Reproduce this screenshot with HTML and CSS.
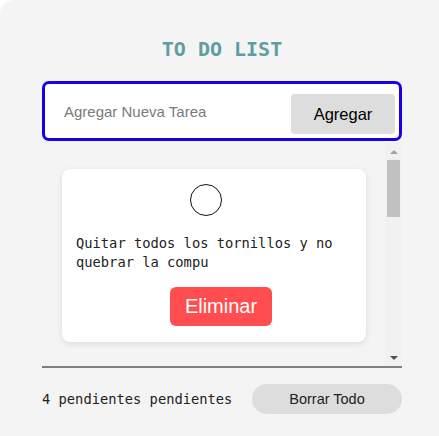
FILE: index.html
```html
<!DOCTYPE html>
<html lang="es">
<head>
<meta charset="utf-8">
<title>To Do List</title>
<link rel="stylesheet" href="styles.css">
</head>
<body>
<div class="app">
  <h1 class="title">TO DO LIST</h1>
  <form class="add-box" onsubmit="return false">
    <input class="add-input" type="text" placeholder="Agregar Nueva Tarea">
    <button class="add-btn" type="button">Agregar</button>
  </form>
  <div class="list-wrap">
    <div class="list">
      <div class="card">
        <span class="check"></span>
        <p class="task">Quitar todos los tornillos y no quebrar la compu</p>
        <button class="del-btn" type="button">Eliminar</button>
      </div>
      <div class="card">
        <span class="check"></span>
        <p class="task">Limpiar el ventilador y cambiar la pasta térmica</p>
        <button class="del-btn" type="button">Eliminar</button>
      </div>
      <div class="card">
        <span class="check"></span>
        <p class="task">Armar todo de nuevo sin que sobren piezas</p>
        <button class="del-btn" type="button">Eliminar</button>
      </div>
      <div class="card">
        <span class="check"></span>
        <p class="task">Prender la compu y rezar que funcione</p>
        <button class="del-btn" type="button">Eliminar</button>
      </div>
    </div>
    <div class="scrollbar" aria-hidden="true">
      <div class="sb-btn"><span class="arrow-up"></span></div>
      <div class="sb-track"><div class="sb-thumb"></div></div>
      <div class="sb-btn"><span class="arrow-down"></span></div>
    </div>
  </div>
  <div class="footer">
    <span class="count">4 pendientes pendientes</span>
    <button class="clear-btn" type="button">Borrar Todo</button>
  </div>
</div>
</body>
</html>
```
FILE: styles.css
```css
html, body {
  margin: 0;
  padding: 0;
  background: #ffffff;
  overflow: hidden;
}
.app {
  background: #f4f4f4;
  border-top-left-radius: 14px;
  min-height: 100vh;
  box-sizing: border-box;
  padding: 38px 37px 0 42px;
  display: flex;
  flex-direction: column;
}
.title {
  margin: 0;
  font-family: "DejaVu Sans Mono", monospace;
  font-size: 20px;
  font-weight: bold;
  line-height: 23px;
  color: #5f9ea0;
  text-align: center;
}
.add-box {
  margin: 20px 0 0 0;
  height: 60px;
  box-sizing: border-box;
  border: 3px solid #1a00e6;
  border-radius: 7px;
  background: #ffffff;
  display: flex;
  align-items: center;
  padding: 0 4px 0 0;
}
.add-input {
  flex: 1;
  min-width: 0;
  border: none;
  outline: none;
  background: transparent;
  padding: 0 0 0 19px;
  font-family: "Liberation Sans", Arial, sans-serif;
  font-size: 15px;
  color: #333;
}
.add-input::placeholder {
  color: #7a7a7a;
}
.add-btn {
  margin-top: 6px;
  width: 104px;
  height: 40px;
  border: none;
  border-radius: 4px;
  background: #dddddd;
  font-family: "Liberation Sans", Arial, sans-serif;
  font-size: 16.5px;
  color: #000;
  padding: 0;
}
.list-wrap {
  margin-top: 2px;
  height: 225px;
  box-sizing: border-box;
  border-bottom: 2px solid #808080;
  display: flex;
}
.list {
  flex: 1;
  min-width: 0;
  overflow-y: auto;
  scrollbar-width: none;
  padding: 26px 19px 0 20px;
  display: flex;
  flex-direction: column;
  gap: 28px;
}
.scrollbar {
  flex: none;
  width: 17px;
  background: #f1f1f1;
  display: flex;
  flex-direction: column;
}
.sb-btn {
  flex: none;
  height: 17px;
  display: flex;
  align-items: center;
  justify-content: center;
}
.arrow-up {
  width: 0;
  height: 0;
  border-left: 4px solid transparent;
  border-right: 4px solid transparent;
  border-bottom: 4px solid #a3a3a3;
}
.arrow-down {
  width: 0;
  height: 0;
  border-left: 4px solid transparent;
  border-right: 4px solid transparent;
  border-top: 4px solid #505050;
}
.sb-track {
  flex: 1;
  padding: 0 2px;
}
.sb-thumb {
  height: 57px;
  background: #c1c1c1;
}
.card {
  flex: none;
  background: #ffffff;
  border-radius: 8px;
  box-shadow: 0 2px 6px rgba(0, 0, 0, 0.1);
  padding: 15px 14px 16px;
  display: flex;
  flex-direction: column;
}
.check {
  align-self: center;
  margin-right: 16px;
  width: 30px;
  height: 30px;
  border: 1px solid #111;
  border-radius: 50%;
}
.task {
  margin: 18px 0 0 0;
  font-family: "DejaVu Sans Mono", monospace;
  font-size: 13.75px;
  line-height: 19px;
  color: #222;
}
.del-btn {
  align-self: center;
  margin: 15px 0 0 14px;
  width: 102px;
  height: 39px;
  border: none;
  border-radius: 6px;
  background: #ff4d50;
  color: #ffffff;
  font-family: "Liberation Sans", Arial, sans-serif;
  font-size: 20px;
  padding: 0;
}
.footer {
  margin-top: 16px;
  display: flex;
  justify-content: space-between;
  align-items: center;
}
.count {
  font-family: "DejaVu Sans Mono", monospace;
  font-size: 13.75px;
  line-height: 16px;
  color: #222;
}
.clear-btn {
  width: 150px;
  height: 30px;
  border: none;
  border-radius: 15px;
  background: #dddddd;
  font-family: "Liberation Sans", Arial, sans-serif;
  font-size: 14.5px;
  color: #222;
  padding: 0;
}
```
